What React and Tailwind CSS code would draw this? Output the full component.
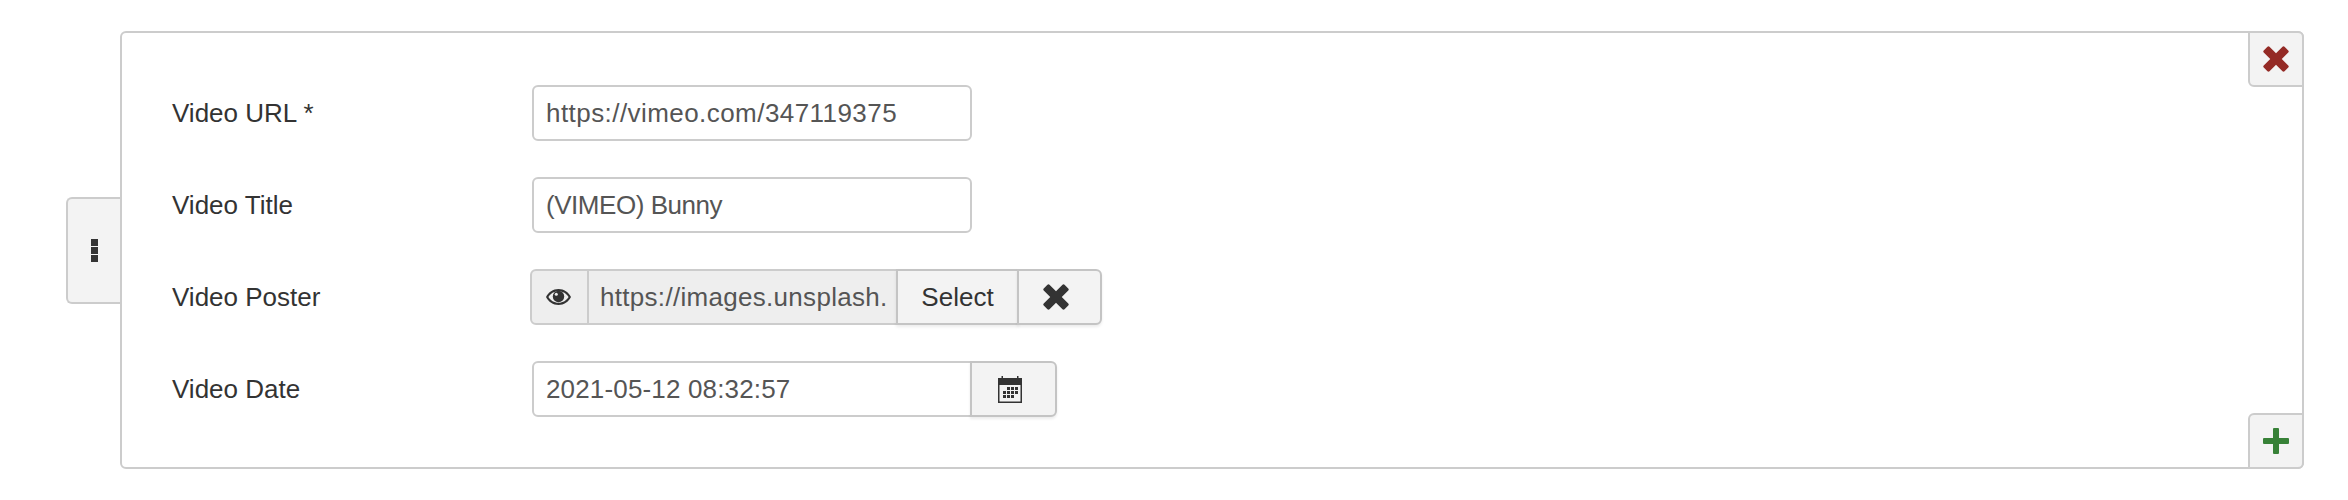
const font = "font-['Liberation_Sans',Arial,sans-serif]";

const TimesIcon = ({ className }) => (
  <svg viewBox="0 0 28 28" className={className} fill="currentColor">
    <path d="M7 .8 14 7.800 21 .8a1.600 1.600 0 0 1 2.200 0l4 4a1.600 1.600 0 0 1 0 2.200L20.200 14l7 7a1.600 1.600 0 0 1 0 2.200l-4 4a1.600 1.600 0 0 1-2.200 0l-7-7-7 7a1.600 1.600 0 0 1-2.200 0l-4-4a1.600 1.600 0 0 1 0-2.200l7-7-7-7a1.600 1.600 0 0 1 0-2.200l4-4A1.600 1.600 0 0 1 7 .8Z" />
  </svg>
);

const PlusIcon = ({ className }) => (
  <svg viewBox="0 0 26 26" className={className} fill="currentColor">
    <path d="M10 1a1 1 0 0 1 1-1h4a1 1 0 0 1 1 1v9h9a1 1 0 0 1 1 1v4a1 1 0 0 1-1 1h-9v9a1 1 0 0 1-1 1h-4a1 1 0 0 1-1-1v-9H1a1 1 0 0 1-1-1v-4a1 1 0 0 1 1-1h9V1Z" />
  </svg>
);

const EyeIcon = ({ className }) => (
  <svg viewBox="0 0 25 16" className={className}>
    <path
      fill="currentColor"
      fillRule="evenodd"
      d="M12.500 0C7 0 2.500 3.200 0 8c2.500 4.800 7 8 12.500 8S22.500 12.800 25 8C22.500 3.200 18 0 12.500 0ZM12.500 2.200C8 2.200 4.500 4.600 2.400 8c2.100 3.400 5.600 5.800 10.100 5.800S20.500 11.400 22.600 8C20.500 4.600 17 2.200 12.500 2.200Z"
    />
    <circle cx="12.500" cy="7.500" r="5.700" fill="currentColor" />
    <circle cx="10.300" cy="5.300" r="1.500" fill="#eeeeee" />
  </svg>
);

const calendarCells = [
  [9, 11], [13, 11], [17, 11],
  [5, 15], [9, 15], [13, 15], [17, 15],
  [5, 19], [9, 19], [13, 19],
];

const CalendarIcon = ({ className }) => (
  <svg viewBox="0 0 24 27" className={className} fill="currentColor">
    <path
      fillRule="evenodd"
      d="M0 2h3.500V0h1.500v2h14V0h1.500v2H24v25H0V2Zm1.500 7v16.500h21V9h-21Z"
    />
    {calendarCells.map(([x, y]) => (
      <rect key={`${x}-${y}`} x={x} y={y} width="3" height="3" />
    ))}
  </svg>
);

const fieldClass =
  "h-14 w-[440px] rounded-[6px] border-2 border-[#cccccc] bg-white px-[12px] text-[26px] text-[#555555] outline-none";

const Row = ({ label, children }) => (
  <div className="flex h-14 items-center">
    <div className="w-[360px] text-[#333333]">{label}</div>
    {children}
  </div>
);

const App = () => {
  return (
    <div className={`${font} h-[500px] bg-white pl-[66px] pr-[44px] pt-[31px] text-[26px]`}>
      <div className="flex h-[438px] items-center">
        <div className="flex h-[107px] w-[54px] shrink-0 flex-col items-center justify-center gap-[1px] rounded-l-[6px] border-y-2 border-l-2 border-[#cccccc] bg-[#f3f3f3]">
          <span className="h-[7px] w-[7px] bg-[#333333]" />
          <span className="h-[7px] w-[7px] bg-[#333333]" />
          <span className="h-[7px] w-[7px] bg-[#333333]" />
        </div>
        <div className="relative flex h-full flex-1 flex-col gap-[36px] rounded-[6px] border-2 border-[#cccccc] bg-white pl-[50px] pt-[52px]">
          <div className="absolute -right-[2px] -top-[2px] flex h-[56px] w-[56px] items-center justify-center rounded-tr-[6px] rounded-bl-[6px] border-2 border-[#cccccc] bg-[#f3f3f3] text-[#942a25]">
            <TimesIcon className="h-[26px] w-[26px]" />
          </div>
          <div className="absolute -bottom-[2px] -right-[2px] flex h-[56px] w-[56px] items-center justify-center rounded-br-[6px] rounded-tl-[6px] border-2 border-[#cccccc] bg-[#f3f3f3] text-[#378137]">
            <PlusIcon className="h-[26px] w-[26px]" />
          </div>

          <Row label="Video URL *">
            <input readOnly value="https://vimeo.com/347119375" className={`${fieldClass} tracking-[0.44px]`} />
          </Row>
          <Row label="Video Title">
            <input readOnly value="(VIMEO) Bunny" className={`${fieldClass} tracking-[-0.46px]`} />
          </Row>
          <Row label="Video Poster">
            <div className="-ml-[2px] flex h-14 items-stretch">
              <div className="flex w-[59px] items-center justify-center rounded-l-[6px] border-2 border-[#cccccc] bg-[#eeeeee] pr-[3px] text-[#333333]">
                <EyeIcon className="h-[16px] w-[25px]" />
              </div>
              <input
                readOnly
                value="https://images.unsplash.com/photo-1518791841217"
                className="w-[307px] border-y-2 border-[#cccccc] bg-[#eeeeee] pl-[11px] pr-[10px] text-[26px] tracking-[0.3px] text-[#555555] outline-none"
              />
              <div className="flex w-[123px] items-center justify-center border-2 border-[#c4c4c4] bg-[#f3f3f3] text-[#333333] shadow-[0_2px_3px_rgba(0,0,0,0.08)]">
                Select
              </div>
              <div className="-ml-[2px] flex w-[85px] items-center justify-center rounded-r-[6px] border-2 border-[#c4c4c4] bg-[#f3f3f3] pr-[8px] text-[#333333] shadow-[0_2px_3px_rgba(0,0,0,0.08)]">
                <TimesIcon className="h-[26px] w-[26px]" />
              </div>
            </div>
          </Row>
          <Row label="Video Date">
            <div className="flex h-14 items-stretch">
              <input
                readOnly
                value="2021-05-12 08:32:57"
                className="w-[440px] rounded-l-[6px] border-2 border-[#cccccc] bg-white px-[12px] text-[26px] tracking-[0.16px] text-[#555555] outline-none"
              />
              <div className="-ml-[2px] flex w-[87px] items-center justify-center rounded-r-[6px] border-2 border-[#c4c4c4] bg-[#f3f3f3] pr-[7px] text-[#333333] shadow-[0_2px_3px_rgba(0,0,0,0.08)]">
                <CalendarIcon className="h-[27px] w-[24px]" />
              </div>
            </div>
          </Row>
        </div>
      </div>
    </div>
  );
};

export default App;
